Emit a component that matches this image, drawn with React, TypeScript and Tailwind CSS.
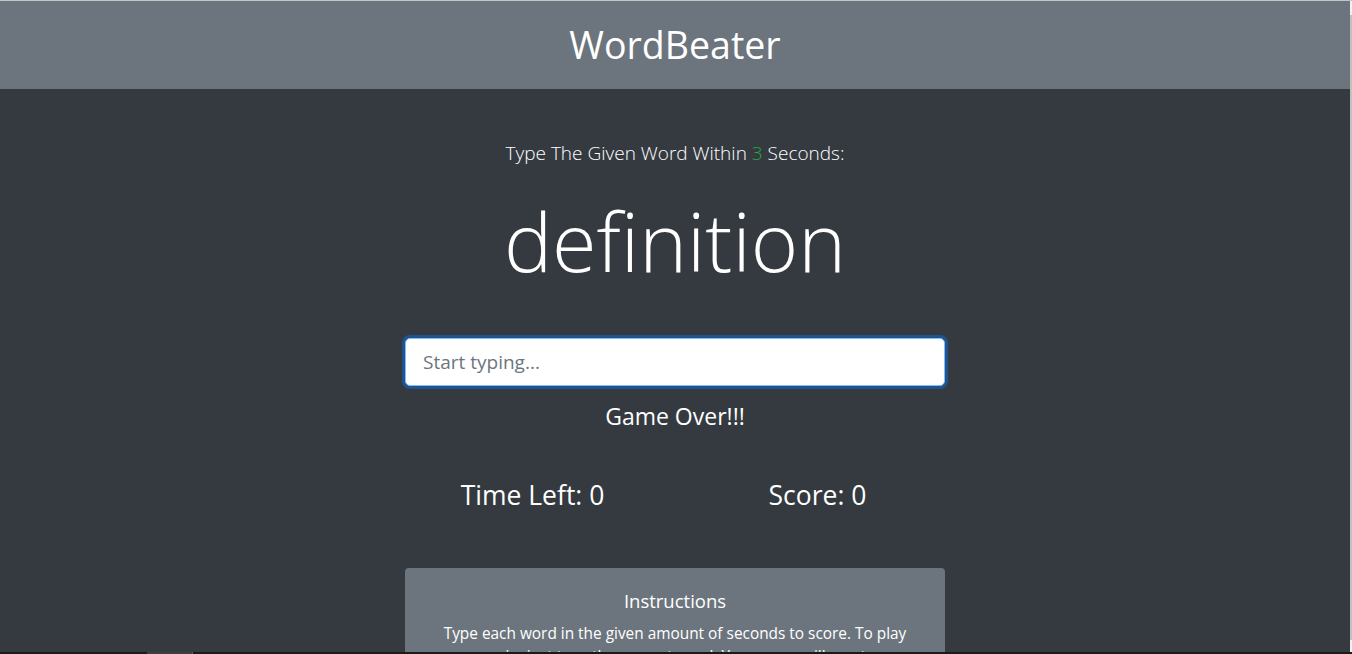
export default function App() {
  return (
    <div className="h-[654px] overflow-hidden flex flex-col bg-[#343a40] text-white font-['Open_Sans','Noto_Sans',sans-serif]">
      <div className="h-px bg-[#c4c4c4]" />
      <div className="flex-1 flex min-h-0">
        <div className="flex-1 flex flex-col min-w-0">
          {/* Header */}
          <header className="h-[88px] shrink-0 bg-[#6c757d] flex items-center justify-center">
            <h1 className="text-[37.5px] leading-none font-normal">WordBeater</h1>
          </header>

          {/* Game */}
          <main className="w-[540px] mx-auto flex flex-col items-center">
            <p className="mt-[50px] text-[19px] leading-[1.5] font-light">
              Type The Given Word Within <span className="text-[#28a745]">3</span> Seconds:
            </p>
            <h2 className="mt-[24px] text-[81px] leading-[1.2] font-light">definition</h2>
            <input
              type="text"
              placeholder="Start typing..."
              className="mt-[49px] w-full h-[48px] rounded-[5px] bg-white border border-[#80bdff] ring-[3px] ring-[#007bff]/40 px-[17px] text-[19px] text-[#495057] placeholder:text-[#6c757d] outline-none"
            />
            <h4 className="mt-[17px] text-[23px] leading-[1.2]">Game Over!!!</h4>

            <div className="mt-[50px] w-[570px] grid grid-cols-2">
              <h3 className="text-center text-[26.5px] leading-[1.2]">Time Left: 0</h3>
              <h3 className="text-center text-[26.5px] leading-[1.2]">Score: 0</h3>
            </div>

            <div className="mt-[56px] w-full bg-[#6c757d] rounded-[4px] px-5 pt-[22px] text-center">
              <h5 className="text-[18.5px] leading-[1.2] mb-[10px]">Instructions</h5>
              <p className="text-[15.4px] leading-[1.5]">
                Type each word in the given amount of seconds to score. To play
                again, just type the current word. Your score will reset.
              </p>
            </div>
          </main>
        </div>

        {/* Scrollbar edge */}
        <div className="w-[2px] shrink-0 flex flex-col">
          <div className="h-[14px] bg-[#f1f1f1]" />
          <div className="flex-1 bg-[#c1c1c1]" />
          <div className="h-[12px] bg-[#f1f1f1]" />
        </div>
      </div>

      {/* Bottom strip */}
      <div className="h-[2px] shrink-0 flex bg-[#1b1b1b]">
        <div className="w-[147px]" />
        <div className="w-[45px] bg-[#404040]" />
        <div className="w-px bg-[#5a5a5a]" />
      </div>
    </div>
  );
}
